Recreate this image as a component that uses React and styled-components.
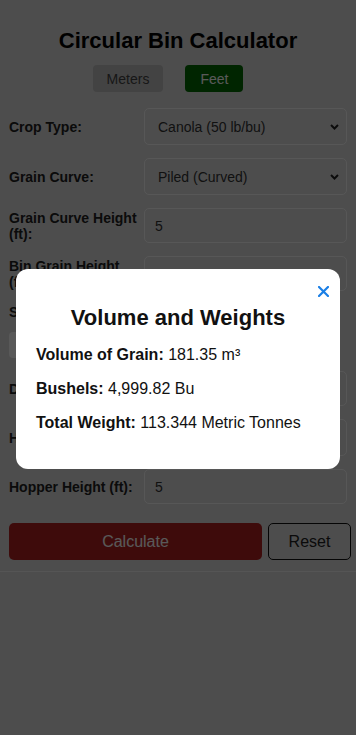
import React from "react";
import styled, { createGlobalStyle } from "styled-components";

const GlobalStyle = createGlobalStyle`
  html, body { margin: 0; padding: 0; background: #dcdcdc; }
  body { font-family: "Liberation Sans", Arial, sans-serif; }
  * { box-sizing: border-box; }
`;

const Page = styled.div`
  min-height: 735px;
`;

const Container = styled.div`
  padding: 0 9px 11px 9px;
  border-bottom: 1px solid #f4f4f4;
`;

const Title = styled.h1`
  margin: 28px 0 12px;
  font-size: 22px;
  line-height: 25px;
  font-weight: 700;
  text-align: center;
  color: #000;
`;

const UnitToggle = styled.div`
  display: flex;
  justify-content: center;
  gap: 22px;
  margin-bottom: 16px;
  padding-right: 20px;
`;

const UnitButton = styled.button`
  height: 27px;
  padding: 0 ${(p) => (p.$active ? 15 : 14)}px;
  border: none;
  border-radius: 4px;
  font-family: inherit;
  font-size: 14px;
  background: ${(p) => (p.$active ? "#006a00" : "#c0c0c0")};
  color: ${(p) => (p.$active ? "#fff" : "#444")};
`;

const Row = styled.div`
  display: grid;
  grid-template-columns: 130px 1fr;
  column-gap: 5px;
  align-items: center;
  margin-bottom: ${(p) => p.$mb ?? 13}px;
`;

const Label = styled.label`
  font-size: 14px;
  line-height: 16px;
  font-weight: 700;
  color: #222;
`;

const SectionLabel = styled.div`
  font-size: 14px;
  line-height: 16px;
  font-weight: 700;
  color: #222;
  margin: 2px 0 12px;
`;

const FloorBox = styled.div`
  display: flex;
  gap: 10px;
  margin-bottom: 13px;
`;

const FloorOption = styled.div`
  height: 26px;
  padding: 0 14px;
  display: flex;
  align-items: center;
  border-radius: 4px;
  background: #fff;
  font-size: 14px;
  color: #333;
`;

const SelectWrap = styled.div`
  position: relative;
`;

const Select = styled.select`
  appearance: none;
  -webkit-appearance: none;
  width: 100%;
  height: 37px;
  padding: 0 28px 0 13px;
  border: 1px solid #fafafa;
  border-radius: 5px;
  background: #dcdcdc;
  font-family: inherit;
  font-size: 14px;
  color: #333;
`;

const Chevron = styled.svg`
  position: absolute;
  right: 8px;
  top: 50%;
  width: 9px;
  height: 6px;
  transform: translateY(-50%);
  pointer-events: none;
`;

const Input = styled.input`
  width: 100%;
  height: 35px;
  padding: 0 10px;
  border: 1px solid #fafafa;
  border-radius: 5px;
  background: #dcdcdc;
  font-family: inherit;
  font-size: 14px;
  color: #333;
`;

const Actions = styled.div`
  display: grid;
  grid-template-columns: 1fr 83px;
  column-gap: 6px;
  margin: 19px -4px 0 0;
`;

const CalcButton = styled.button`
  height: 37px;
  border: none;
  border-radius: 5px;
  background: #b22222;
  color: #fff;
  font-family: inherit;
  font-size: 16px;
`;

const ResetButton = styled.button`
  height: 37px;
  border: 1px solid #111;
  border-radius: 5px;
  background: #dcdcdc;
  color: #222;
  font-family: inherit;
  font-size: 16px;
`;

const Overlay = styled.div`
  position: fixed;
  inset: 0;
  padding-top: 2px;
  background: rgba(0, 0, 0, 0.65);
  display: flex;
  align-items: center;
  justify-content: center;
`;

const Modal = styled.div`
  position: relative;
  width: 324px;
  padding: 20px 20px 21px;
  background: #fff;
  border-radius: 12px;
`;

const CloseButton = styled.button`
  position: absolute;
  top: 16px;
  right: 10px;
  width: 14px;
  height: 14px;
  padding: 0;
  border: none;
  background: transparent;
  display: flex;
  align-items: center;
  justify-content: center;
`;

const ModalTitle = styled.h2`
  margin: 16px 0;
  font-size: 22px;
  line-height: 25px;
  font-weight: 700;
  text-align: center;
  color: #111;
`;

const ResultLine = styled.p`
  margin: 16px 0;
  font-size: 16px;
  line-height: 18px;
  color: #111;
  & strong { font-weight: 700; }
`;

const ChevronIcon = () => (
  <Chevron viewBox="0 0 9 6">
    <path d="M1 1 L4.5 4.5 L8 1" fill="none" stroke="#222" strokeWidth="2" />
  </Chevron>
);

const SelectField = ({ value, children }) => (
  <SelectWrap>
    <Select defaultValue={value}>{children}</Select>
    <ChevronIcon />
  </SelectWrap>
);

export default function App() {
  return (
    <Page>
      <GlobalStyle />
      <Container>
        <Title>Circular Bin Calculator</Title>
        <UnitToggle>
          <UnitButton>Meters</UnitButton>
          <UnitButton $active>Feet</UnitButton>
        </UnitToggle>

        <Row>
          <Label>Crop Type:</Label>
          <SelectField value="canola">
            <option value="canola">Canola (50 lb/bu)</option>
            <option value="wheat">Wheat (60 lb/bu)</option>
          </SelectField>
        </Row>
        <Row>
          <Label>Grain Curve:</Label>
          <SelectField value="piled">
            <option value="piled">Piled (Curved)</option>
            <option value="flat">Flat</option>
          </SelectField>
        </Row>
        <Row>
          <Label>Grain Curve Height (ft):</Label>
          <Input defaultValue="5" />
        </Row>
        <Row>
          <Label>Bin Grain Height (ft):</Label>
          <Input defaultValue="24" />
        </Row>

        <SectionLabel>Select Floor Type:</SectionLabel>
        <FloorBox>
          <FloorOption>Hopper Bottom</FloorOption>
        </FloorBox>

        <Row>
          <Label>Diameter (ft):</Label>
          <Input defaultValue="18" />
        </Row>
        <Row>
          <Label>Hopper Angle:</Label>
          <SelectField value="45">
            <option value="45">45°</option>
          </SelectField>
        </Row>
        <Row $mb={0}>
          <Label>Hopper Height (ft):</Label>
          <Input defaultValue="5" />
        </Row>

        <Actions>
          <CalcButton>Calculate</CalcButton>
          <ResetButton>Reset</ResetButton>
        </Actions>
      </Container>

      <Overlay>
        <Modal>
          <CloseButton aria-label="Close">
            <svg width="11" height="11" viewBox="0 0 11 11">
              <path d="M1 1 L10 10 M10 1 L1 10" stroke="#1a7fe6" strokeWidth="2.2" strokeLinecap="square" />
            </svg>
          </CloseButton>
          <ModalTitle>Volume and Weights</ModalTitle>
          <ResultLine><strong>Volume of Grain:</strong> 181.35 m³</ResultLine>
          <ResultLine><strong>Bushels:</strong> 4,999.82 Bu</ResultLine>
          <ResultLine><strong>Total Weight:</strong> 113.344 Metric Tonnes</ResultLine>
        </Modal>
      </Overlay>
    </Page>
  );
}
